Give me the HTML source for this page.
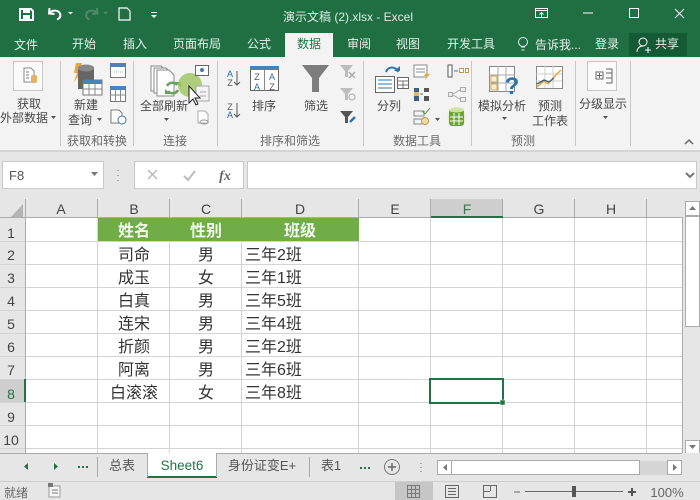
<!DOCTYPE html>
<html><head><meta charset="utf-8"><style>
html,body{margin:0;padding:0;width:700px;height:500px;overflow:hidden;background:#fff}
svg{display:block}
text{font-family:"Liberation Sans","Noto Sans CJK SC",sans-serif}
.t{font-size:12px;fill:#484848;text-anchor:middle}
.g{font-size:12px;fill:#6a6a6a;text-anchor:middle}
.w{font-size:12px;fill:#e6f0ea;text-anchor:middle}
.c{font-size:16px;fill:#333;text-anchor:middle}
.l{font-size:16px;fill:#333}
.r{font-size:14px;fill:#444;text-anchor:middle}
.b{font-size:16px;fill:#f2f8ee;text-anchor:middle;font-weight:700}
.s{font-size:13px;fill:#555;text-anchor:middle}
</style></head><body>
<svg width="700" height="500" viewBox="0 0 700 500" xmlns="http://www.w3.org/2000/svg">
<!-- backgrounds -->
<rect width="700" height="57" fill="#1f6f43"/>
<rect y="57" width="700" height="93" fill="#f3f3f3"/>
<rect y="150" width="700" height="2" fill="#d4d4d4"/>
<rect y="152" width="700" height="348" fill="#e6e6e6"/>
<!-- QAT -->
<path d="M20 9h11l2 2v9H20z" fill="none" stroke="#fff" stroke-width="2"/><rect x="23" y="9" width="7" height="4" fill="#fff"/><rect x="23" y="15" width="7" height="5" fill="#fff"/>
<path d="M49.500 8l-.5 5.500 5.500 .5M49.500 13c3-3.500 9-3 10.500 .5 1 3-.5 5-3 6" fill="none" stroke="#fff" stroke-width="2"/>
<path d="M68 12h5l-2.500 2.500z" fill="#e6f0ea"/>
<path d="M97 8l.5 5.500-5.500 .5M97 13c-3-3.500-9-3-10.500 .5-1 3 .5 5 3 6" fill="none" stroke="#4d8b69" stroke-width="2"/>
<path d="M103 12h5l-2.500 2.500z" fill="#4d8b69"/>
<path d="M119 8h8l3 3v9h-11z" fill="none" stroke="#fff" stroke-width="1.200"/>
<rect x="151" y="12" width="6" height="1" fill="#fff"/><path d="M151 15h6l-3 3z" fill="#fff"/>
<text x="348" y="21" font-size="12" fill="#dcebe2" text-anchor="middle">演示文稿 (2).xlsx - Excel</text>
<!-- window controls -->
<rect x="535.500" y="8.500" width="12" height="9" fill="none" stroke="#fff"/><path d="M536 10.500h12M541.500 17v-4M539.500 14.500l2-2 2 2" fill="none" stroke="#fff"/>
<rect x="583" y="12.500" width="10" height="1" fill="#fff"/>
<rect x="629.500" y="8.500" width="9" height="9" fill="none" stroke="#fff"/>
<path d="M675 9l9 9M684 9l-9 9" stroke="#fff" fill="none"/>
<!-- tabs -->
<rect x="285" y="33" width="48" height="24" fill="#f3f3f3"/>
<text class="w" x="26" y="49">文件</text><text class="w" x="84" y="48">开始</text><text class="w" x="135" y="48">插入</text>
<text class="w" x="197" y="48">页面布局</text><text class="w" x="259" y="48">公式</text>
<text x="309" y="48" font-size="12" fill="#217346" text-anchor="middle">数据</text>
<text class="w" x="359" y="48">审阅</text><text class="w" x="408" y="48">视图</text><text class="w" x="471" y="48">开发工具</text>
<text class="w" x="558" y="49">告诉我...</text><text class="w" x="607" y="48">登录</text>
<circle cx="523" cy="42" r="4.500" fill="none" stroke="#e6f0ea"/><path d="M521 47h4M521.500 50h3" stroke="#e6f0ea"/>
<rect x="629" y="33" width="58" height="23" fill="#135a35"/>
<circle cx="643" cy="42" r="4" fill="none" stroke="#fff"/><path d="M637 52c0-4 3-6 6-6M645 50h6M648 47v6" fill="none" stroke="#fff"/>
<text class="w" x="667" y="48">共享</text>
<!-- group separators -->
<g stroke="#c8c8c8"><path d="M60.500 61v85M133.500 61v85M217.500 61v85M363.500 61v85M471.500 61v85M575.500 61v85M630.500 61v85"/></g>
<!-- group 1 -->
<rect x="13.500" y="61.500" width="29" height="29" fill="#fafafa" stroke="#c6c6c6"/>
<path d="M24 68h7l3 3v11H24z" fill="#fff" stroke="#888"/><path d="M26 72h3M26 75h3M26 78h3" stroke="#777"/><rect x="31" y="75" width="6" height="8" rx="2" fill="#e3b368"/>
<text class="t" x="29" y="108">获取</text><text class="t" x="24" y="122">外部数据</text><path d="M51 116h5l-2.500 3z" fill="#555"/>
<text class="g" x="97" y="145">获取和转换</text><text class="g" x="175" y="145">连接</text><text class="g" x="290" y="145">排序和筛选</text><text class="g" x="417" y="145">数据工具</text><text class="g" x="523" y="145">预测</text>
<!-- group 2 -->
<path d="M76 63h6l-3 8h3l-8 11 3-9h-3z" fill="#e8a73d"/>
<rect x="78" y="67" width="16" height="22" fill="#666"/><ellipse cx="86" cy="68" rx="8" ry="3.500" fill="#888"/>
<rect x="83" y="80" width="19" height="15" fill="#fff" stroke="#777"/><rect x="83" y="80" width="19" height="4" fill="#4b82b8"/><path d="M89 84v11M95 84v11M83 89h19" stroke="#888"/>
<text class="t" x="86" y="109">新建</text><text class="t" x="80" y="124">查询</text><path d="M97 118h5l-2.500 3z" fill="#555"/>
<rect x="110.500" y="63.500" width="15" height="14" fill="#fff" stroke="#777"/><rect x="110" y="63" width="16" height="4" fill="#4b82b8"/><path d="M114 72h9" stroke="#aaa" stroke-dasharray="1 1"/>
<rect x="110.500" y="87.500" width="15" height="14" fill="#fff" stroke="#777"/><rect x="110" y="86" width="16" height="4" fill="#4b82b8"/><path d="M115.500 90v12M120.500 90v12M110 95h16" stroke="#888"/>
<path d="M111 110h8l3 3v10h-11z" fill="#fff" stroke="#777"/><circle cx="122" cy="120" r="4" fill="#fff" stroke="#3f79ad"/>
<!-- group 3 -->
<path d="M151 66h10l4 4v21h-14z" fill="#fff" stroke="#888"/><path d="M154 68h12l4 4v21h-16z" fill="#fff" stroke="#888"/><path d="M157 70h12l5 5v21h-17z" fill="#fff" stroke="#888"/>
<path d="M167 86a6 6 0 0 1 10-1M178 90a6 6 0 0 1-10 1" fill="none" stroke="#62a55a" stroke-width="2.500"/>
<path d="M175 82h6v5zM171 94h-6v-5z" fill="#62a55a"/>
<circle cx="190" cy="85" r="12" fill="#9cc45c" fill-opacity=".8"/>
<rect x="195.500" y="65.500" width="13" height="10" fill="#fff" stroke="#666"/><circle cx="202" cy="70" r="2" fill="#3f79ad"/>
<rect x="196" y="86" width="13" height="15" fill="#f3f3f3" stroke="#aaa"/><path d="M200 92h6M200 96h6" stroke="#aaa"/>
<path d="M198 111h7l3 3v9h-10z" fill="#fff" stroke="#aaa"/><ellipse cx="204" cy="122" rx="4" ry="2" fill="none" stroke="#999"/>
<text class="t" x="164" y="110">全部刷新</text><path d="M164 118h5l-2.500 3z" fill="#555"/>
<path d="M189 86v17l4-4 3 6 2-1-3-6h5z" fill="#fff" stroke="#222"/>
<!-- group 4 -->
<text x="230" y="77" style="font-size:9px" fill="#2a6aa8" text-anchor="middle">A</text><text x="230" y="86" style="font-size:9px" fill="#555" text-anchor="middle">Z</text><path d="M237 71v14M234 82l3 3 3-3" fill="none" stroke="#555"/>
<text x="230" y="110" style="font-size:9px" fill="#555" text-anchor="middle">Z</text><text x="230" y="118" style="font-size:9px" fill="#2a6aa8" text-anchor="middle">A</text><path d="M237 103v14M234 114l3 3 3-3" fill="none" stroke="#555"/>
<rect x="250.500" y="66.500" width="28" height="24" fill="#fff" stroke="#666"/><rect x="250" y="66" width="29" height="4" fill="#4b82b8"/><path d="M264.500 70v21" stroke="#888"/>
<text x="257" y="80" style="font-size:9px" fill="#555" text-anchor="middle">Z</text><text x="257" y="90" style="font-size:9px" fill="#2a6aa8" text-anchor="middle">A</text><text x="272" y="80" style="font-size:9px" fill="#2a6aa8" text-anchor="middle">A</text><text x="272" y="90" style="font-size:9px" fill="#555" text-anchor="middle">Z</text>
<text class="t" x="264" y="110">排序</text>
<path d="M302 65h27l-10 13v14h-7V78z" fill="#7d7d7d"/>
<text class="t" x="316" y="110">筛选</text>
<path d="M340 65h13l-5 6v6h-3v-6z" fill="#bdbdbd"/><path d="M349 72l6 6M355 72l-6 6" stroke="#aaa" stroke-width="1.500"/>
<path d="M340 88h13l-5 6v6h-3v-6z" fill="#bdbdbd"/><circle cx="352" cy="97" r="3" fill="none" stroke="#aaa"/>
<path d="M340 111h13l-5 6v6h-3v-6z" fill="#555"/><path d="M350 122l5-5" stroke="#2f73ad" stroke-width="2.500"/>
<!-- group 5 -->
<path d="M375.500 76.500h19v16h-19z" fill="#fff" stroke="#666"/><path d="M378 80h14M378 84h14M378 88h14" stroke="#2f73ad"/>
<rect x="397.500" y="77.500" width="11" height="11" fill="#fff" stroke="#666"/><path d="M397 81h11M403 81v8M397 85h11" stroke="#777"/>
<path d="M386 72c2-6 10-6 12 0" fill="none" stroke="#2f73ad" stroke-width="2"/><path d="M394 71h6v-5z" fill="#2f73ad"/>
<text class="t" x="389" y="110">分列</text>
<rect x="414" y="65" width="13" height="12" fill="#fff" stroke="#888"/><path d="M416 69h9M416 72h9" stroke="#888"/><path d="M428 70l-4 6h3l-3 5 6-7h-3z" fill="#e8a73d"/>
<rect x="414" y="88" width="5" height="13" fill="#3f5f80"/><rect x="424" y="88" width="5" height="13" fill="#555"/><rect x="414" y="92" width="5" height="4" fill="#e3b368"/><rect x="424" y="92" width="5" height="4" fill="#fff"/><path d="M420 94h3" stroke="#3f79ad"/>
<rect x="414" y="111" width="10" height="5" fill="none" stroke="#888"/><rect x="414" y="119" width="8" height="5" fill="none" stroke="#888"/><circle cx="425" cy="121" r="3.500" fill="#f0d9a8" stroke="#c49a4a"/><path d="M422 111l3 3 5-6" fill="none" stroke="#5c9e45"/>
<path d="M435 118h5l-2.500 3z" fill="#555"/>
<rect x="448" y="65" width="4" height="12" fill="#fff" stroke="#555"/><path d="M454 71h4" stroke="#3f79ad"/><rect x="459.500" y="68.500" width="4" height="4" fill="#fff" stroke="#c49a4a"/><rect x="465.500" y="68.500" width="3" height="4" fill="#fff" stroke="#c49a4a"/>
<rect x="448.500" y="92.500" width="4" height="4" fill="#eee" stroke="#aaa"/><rect x="460.500" y="87.500" width="5" height="4" fill="#eee" stroke="#aaa"/><rect x="460.500" y="97.500" width="5" height="4" fill="#eee" stroke="#aaa"/><path d="M453 94l7-4M453 95l7 4" stroke="#aaa"/>
<ellipse cx="456.500" cy="117" rx="9" ry="10" fill="#e8efc8"/><rect x="449" y="109" width="15" height="17" rx="3" fill="#6ba539"/><ellipse cx="456.500" cy="110" rx="7.500" ry="2.500" fill="#cfe3a3"/><path d="M454 113v12M459 113v12M450 117h13M450 121h13" stroke="#fff"/>
<!-- group 6 -->
<rect x="489.500" y="66.500" width="25" height="25" fill="#fff" stroke="#888"/><path d="M498 66v26M506 66v26M489 75h26M489 83h26" stroke="#aaa"/><rect x="491" y="76" width="6" height="6" fill="#fbeed0" stroke="#c9a860"/><rect x="491" y="84" width="6" height="6" fill="#fbeed0" stroke="#c9a860"/>
<text x="512" y="94" style="font-size:24px" font-weight="700" fill="#2f73ad" text-anchor="middle">?</text>
<text class="t" x="502" y="110">模拟分析</text><path d="M502 117h5l-2.500 3z" fill="#555"/>
<rect x="536.500" y="66.500" width="26" height="22" fill="#fff" stroke="#888"/><path d="M545 66v22M553 66v22M536 74h26M536 81h26" stroke="#ccc"/>
<path d="M537 87l7-6 4 3 7-8 6-6" fill="none" stroke="#e8a73d" stroke-width="1.500"/><path d="M537 84l7-4 5 2 5-4" fill="none" stroke="#3f5f80" stroke-width="1.300"/>
<text class="t" x="550" y="110">预测</text><text class="t" x="550" y="125">工作表</text>
<!-- group 7 -->
<rect x="587.500" y="61.500" width="29" height="29" fill="#fafafa" stroke="#c6c6c6"/>
<rect x="596" y="72" width="7" height="7" fill="#fff" stroke="#666"/><path d="M597 75.500h5M599.500 73v5" stroke="#666"/><path d="M606 69h6v14h-6M606 73h6M606 78h6" fill="none" stroke="#666"/>
<text class="t" x="603" y="108">分级显示</text><path d="M603 116h5l-2.500 3z" fill="#555"/>
<path d="M685 144l4-4 4 4" fill="none" stroke="#666" stroke-width="1.500"/>
<!-- formula bar -->
<rect x="2.500" y="161.500" width="101" height="27" fill="#fff" stroke="#c8c8c8"/>
<text x="9" y="180" style="font-size:13px" fill="#555">F8</text><path d="M91 172h7l-3.500 4z" fill="#777"/>
<path d="M118 170v1M118 175v1M118 180v1" stroke="#aaa" stroke-width="2"/>
<rect x="134.500" y="161.500" width="109" height="27" fill="#fff" stroke="#c8c8c8"/>
<path d="M148 170l9 9M157 170l-9 9" stroke="#bbb" stroke-width="1.500"/><path d="M184 176l4 4 7-9" fill="none" stroke="#bbb" stroke-width="2"/>
<text x="225" y="180" style="font-size:14px;font-family:'Liberation Serif',serif;font-style:italic;font-weight:700" fill="#666" text-anchor="middle">fx</text>
<rect x="247.500" y="161.500" width="449" height="27" fill="#fff" stroke="#c8c8c8"/>
<path d="M686 173l4 4 4-4" fill="none" stroke="#777" stroke-width="2"/>
<!-- sheet -->
<rect x="26" y="218" width="656" height="235" fill="#fff"/>
<rect x="431" y="199" width="72" height="18" fill="#cfcfcf"/>
<rect x="0" y="379" width="25" height="23" fill="#cfcfcf"/>
<path d="M23 204v13H11z" fill="#b5b5b5"/>
<g stroke="#d4d4d4"><path d="M97.500 218v235M169.500 218v235M241.500 218v235M358.500 218v235M430.500 218v235M502.500 218v235M574.500 218v235M646.500 218v235"/>
<path d="M0 241.500h682M0 264.500h682M0 287.500h682M0 310.500h682M0 333.500h682M0 356.500h682M0 379.500h682M0 402.500h682M0 425.500h682M0 448.500h682"/></g>
<g stroke="#ababab"><path d="M25.500 199v254M97.500 199v18M169.500 199v18M241.500 199v18M358.500 199v18M430.500 199v18M502.500 199v18M574.500 199v18M646.500 199v18M0 217.500h682M682.500 217v236"/></g>
<rect x="431" y="216" width="72" height="2" fill="#217346"/><rect x="24" y="379" width="2" height="23" fill="#217346"/>
<rect x="98" y="218" width="261" height="23" fill="#70ad47"/>
<text class="r" x="61" y="214">A</text><text class="r" x="134" y="214">B</text><text class="r" x="206" y="214">C</text><text class="r" x="300" y="214">D</text><text class="r" x="395" y="214">E</text><text class="r" x="467" y="214" style="fill:#3f7358">F</text><text class="r" x="539" y="214">G</text><text class="r" x="611" y="214">H</text>
<text class="r" x="11" y="238">1</text><text class="r" x="11" y="260">2</text><text class="r" x="11" y="283">3</text><text class="r" x="11" y="306">4</text><text class="r" x="11" y="329">5</text><text class="r" x="11" y="352">6</text><text class="r" x="11" y="375">7</text><text class="r" x="11" y="399" style="fill:#217346">8</text><text class="r" x="11" y="422">9</text><text class="r" x="11" y="445">10</text>
<text class="b" x="134" y="236">姓名</text><text class="b" x="206" y="236">性别</text><text class="b" x="300" y="236">班级</text>
<text class="c" x="134" y="260">司命</text><text class="c" x="206" y="260">男</text><text class="l" x="245" y="260">三年2班</text>
<text class="c" x="134" y="283">成玉</text><text class="c" x="206" y="283">女</text><text class="l" x="245" y="283">三年1班</text>
<text class="c" x="134" y="306">白真</text><text class="c" x="206" y="306">男</text><text class="l" x="245" y="306">三年5班</text>
<text class="c" x="134" y="329">连宋</text><text class="c" x="206" y="329">男</text><text class="l" x="245" y="329">三年4班</text>
<text class="c" x="134" y="352">折颜</text><text class="c" x="206" y="352">男</text><text class="l" x="245" y="352">三年2班</text>
<text class="c" x="134" y="375">阿离</text><text class="c" x="206" y="375">男</text><text class="l" x="245" y="375">三年6班</text>
<text class="c" x="134" y="398">白滚滚</text><text class="c" x="206" y="398">女</text><text class="l" x="245" y="398">三年8班</text>
<rect x="430" y="379" width="73" height="24" fill="none" stroke="#217346" stroke-width="2"/>
<rect x="500" y="400" width="5" height="5" fill="#217346" stroke="#fff" stroke-width=".5"/>
<!-- v scrollbar -->
<rect x="685.500" y="201.500" width="14" height="14" fill="#fff" stroke="#ababab"/><path d="M689 210h7l-3.500-4z" fill="#777"/>
<rect x="685.500" y="216.500" width="14" height="110" fill="#fff" stroke="#ababab"/>
<rect x="685.500" y="440.500" width="14" height="13" fill="#fff" stroke="#ababab"/><path d="M689 445h7l-3.500 4z" fill="#777"/>
<!-- tabs strip -->
<rect y="453" width="700" height="28" fill="#e6e6e6"/>
<path d="M0 453.500h682" stroke="#ababab"/>
<rect x="148" y="453" width="68" height="25" fill="#fff"/><rect x="147" y="476" width="70" height="2" fill="#217346"/><path d="M147.500 453v24M216.500 453v24" stroke="#ababab"/>
<path d="M28 463v7l-4-3.500zM54 463v7l4-3.500z" fill="#217346"/>
<path d="M78 467h2M82 467h2M86 467h2" stroke="#217346" stroke-width="2"/>
<path d="M97.500 457v20M309.500 457v20" stroke="#ababab"/>
<text class="s" x="122" y="470">总表</text>
<text x="182" y="470" style="font-size:13.500px" fill="#217346" text-anchor="middle">Sheet6</text>
<text class="s" x="262" y="470">身份证变E+</text><text class="s" x="331" y="470">表1</text>
<path d="M360 468h2M364 468h2M368 468h2" stroke="#217346" stroke-width="2"/>
<circle cx="392" cy="467" r="7.500" fill="none" stroke="#777"/><path d="M388 467h8M392 463v8" stroke="#666" stroke-width="1.500"/>
<path d="M421 463v1M421 467v1M421 471v1" stroke="#aaa" stroke-width="2"/>
<rect x="437.500" y="460.500" width="14" height="14" fill="#fff" stroke="#ababab"/><path d="M447 464v7l-4-3.500z" fill="#777"/>
<rect x="451.500" y="460.500" width="188" height="14" fill="#fff" stroke="#ababab"/><rect x="640" y="461" width="27" height="14" fill="#d6d6d6"/>
<rect x="667.500" y="460.500" width="14" height="14" fill="#fff" stroke="#ababab"/><path d="M673 464v7l4-3.500z" fill="#777"/>
<!-- status -->
<path d="M0 481.500h700" stroke="#cfcfcf"/>
<text x="4" y="497" style="font-size:12px" fill="#666">就绪</text>
<rect x="49" y="486" width="11" height="11" fill="#f5f5f5" stroke="#999"/><path d="M52 490h6M52 493h6" stroke="#777"/><rect x="48" y="483" width="5" height="4" fill="#777"/>
<rect x="395" y="482" width="38" height="18" fill="#c6c6c6"/>
<rect x="407.500" y="485.500" width="12" height="12" fill="none" stroke="#777"/><path d="M411.500 485v12M415.500 485v12M407 489.500h12M407 493.500h12" stroke="#777"/>
<rect x="445.500" y="485.500" width="13" height="12" fill="none" stroke="#666"/><path d="M448 488.500h8M448 491.500h8M448 494.500h8" stroke="#666"/>
<rect x="483.500" y="485.500" width="13" height="12" fill="none" stroke="#666"/><path d="M490.500 485v6M483 491.500h7" stroke="#666"/>
<path d="M514 492h6M525 491.500h98" stroke="#666"/><rect x="572" y="486" width="4" height="11" fill="#555"/>
<path d="M628 492h8M632 488v8" stroke="#555" stroke-width="2"/>
<text x="667" y="497" style="font-size:13px" fill="#666" text-anchor="middle">100%</text>
</svg>
</body></html>
